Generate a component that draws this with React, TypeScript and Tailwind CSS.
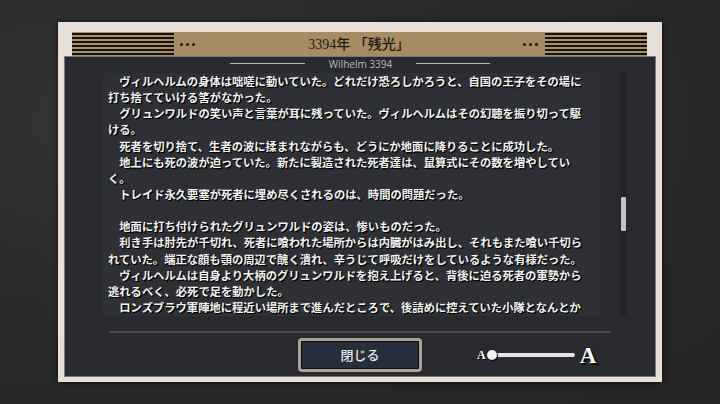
const lines = [
  '　ヴィルヘルムの身体は咄嗟に動いていた。どれだけ恐ろしかろうと、自国の王子をその場に',
  '打ち捨てていける筈がなかった。',
  '　グリュンワルドの笑い声と言葉が耳に残っていた。ヴィルヘルムはその幻聴を振り切って駆',
  'ける。',
  '　死者を切り捨て、生者の波に揉まれながらも、どうにか地面に降りることに成功した。',
  '　地上にも死の波が迫っていた。新たに製造された死者達は、鼠算式にその数を増やしてい',
  'く。',
  '　トレイド永久要塞が死者に埋め尽くされるのは、時間の問題だった。',
  '',
  '　地面に打ち付けられたグリュンワルドの姿は、惨いものだった。',
  '　利き手は肘先が千切れ、死者に喰われた場所からは内臓がはみ出し、それもまた喰い千切ら',
  'れていた。端正な顔も顎の周辺で醜く潰れ、辛うじて呼吸だけをしているような有様だった。',
  '　ヴィルヘルムは自身より大柄のグリュンワルドを抱え上げると、背後に迫る死者の軍勢から',
  '逃れるべく、必死で足を動かした。',
  '　ロンズブラウ軍陣地に程近い場所まで進んだところで、後詰めに控えていた小隊となんとか',
];

function Dots() {
  return (
    <div className="flex items-center gap-[3px]">
      <span className="h-[3px] w-[3px] rounded-full bg-[#1c1710]" />
      <span className="h-[3px] w-[3px] rounded-full bg-[#1c1710]" />
      <span className="h-[3px] w-[3px] rounded-full bg-[#1c1710]" />
    </div>
  );
}

function Stripes() {
  return (
    <div className="h-full w-[102px] bg-[repeating-linear-gradient(to_bottom,#a68c63_0px,#a68c63_1.5px,#141414_1.5px,#141414_3.5px,#a68c63_3.5px,#a68c63_4px)]" />
  );
}

export default function App() {
  return (
    <div className="h-[404px] w-[720px] overflow-hidden bg-[radial-gradient(ellipse_at_20%_30%,#353535_0%,#2a2a2a_45%,#232323_100%)] pt-[22px] pl-[58px]">
      <div className="flex h-[360px] w-[604px] flex-col bg-[#e6e0d9] shadow-[0_0_6px_rgba(0,0,0,0.6)]">
        {/* header */}
        <div className="flex h-[34px] items-end pl-[14px] pr-[15px]">
          <div className="flex h-[24px] flex-1 items-center bg-[#a68c63]">
            <Stripes />
            <div className="ml-[6px]">
              <Dots />
            </div>
            <div className="flex-1 text-center font-['Liberation_Serif','Noto_Sans_CJK_JP',serif] text-[14px] font-medium text-[#1f1a12]">
              3394年 「残光」
            </div>
            <div className="mr-[7px]">
              <Dots />
            </div>
            <Stripes />
          </div>
        </div>

        {/* body */}
        <div className="mx-[6px] mb-[5px] flex flex-1 flex-col border border-[#7c7873] bg-[#292a2f]">
          <div className="flex h-[13px] items-center justify-center">
            <div className="h-[1px] w-[75px] bg-[#b5b5b5]" />
            <div className="mx-[24px] font-['Open_Sans',sans-serif] text-[10px] leading-none text-[#b9b9b9]">
              Wilhelm 3394
            </div>
            <div className="h-[1px] w-[74px] bg-[#b5b5b5]" />
          </div>

          <div className="mt-[2px] flex h-[245px] items-start">
            <div className="mt-[1px] ml-[38px] h-[243px] w-[497px] overflow-hidden bg-[#2f3036] pl-[5px]">
              {lines.map((l, i) => (
                <div
                  key={i}
                  className="h-[16.15px] whitespace-nowrap font-['Noto_Sans_CJK_JP',sans-serif] text-[11.3px] leading-[16.15px] font-bold text-[#f4f4f4] [text-shadow:1px_1px_0_#000,1px_1px_1px_#000]"
                >
                  {l || '\u00a0'}
                </div>
              ))}
            </div>
            <div className="relative ml-[20px] h-[245px] w-[7px] bg-[#222328]">
              <div className="absolute top-[125px] left-[1px] h-[34px] w-[5px] rounded-[1px] bg-[#c4c4c4]" />
            </div>
          </div>

          <div className="mt-[14px] ml-[44px] h-[2px] w-[502px] bg-[#45494f]" />

          <div className="mt-[5px] flex items-center">
            <button className="ml-[233px] flex h-[34px] w-[124px] items-center justify-center rounded-[4px] border-[3px] border-[#a9a394] bg-[#262d3b] shadow-[inset_0_0_0_1px_#0c0e12]">
              <span className="font-['Noto_Sans_CJK_JP',sans-serif] text-[13px] font-medium text-[#e6e6e6]">閉じる</span>
            </button>
            <div className="ml-[55px] flex items-center">
              <span className="font-['Liberation_Serif',serif] text-[12px] font-bold leading-none text-white [text-shadow:1px_1px_0_#000]">
                A
              </span>
              <div className="relative ml-[1px] flex h-[10px] w-[89px] items-center">
                <div className="ml-[4px] h-[4px] w-[84px] rounded-full bg-[#e4e4e4]" />
                <div className="absolute top-0 left-0 h-[10px] w-[10px] rounded-full bg-[#f2f2f2] shadow-[1px_1px_1px_#000]" />
              </div>
              <span className="ml-[4px] font-['Liberation_Serif',serif] text-[23px] font-bold leading-none text-white [text-shadow:2px_2px_0_#000]">
                A
              </span>
            </div>
          </div>
        </div>
      </div>
    </div>
  );
}
